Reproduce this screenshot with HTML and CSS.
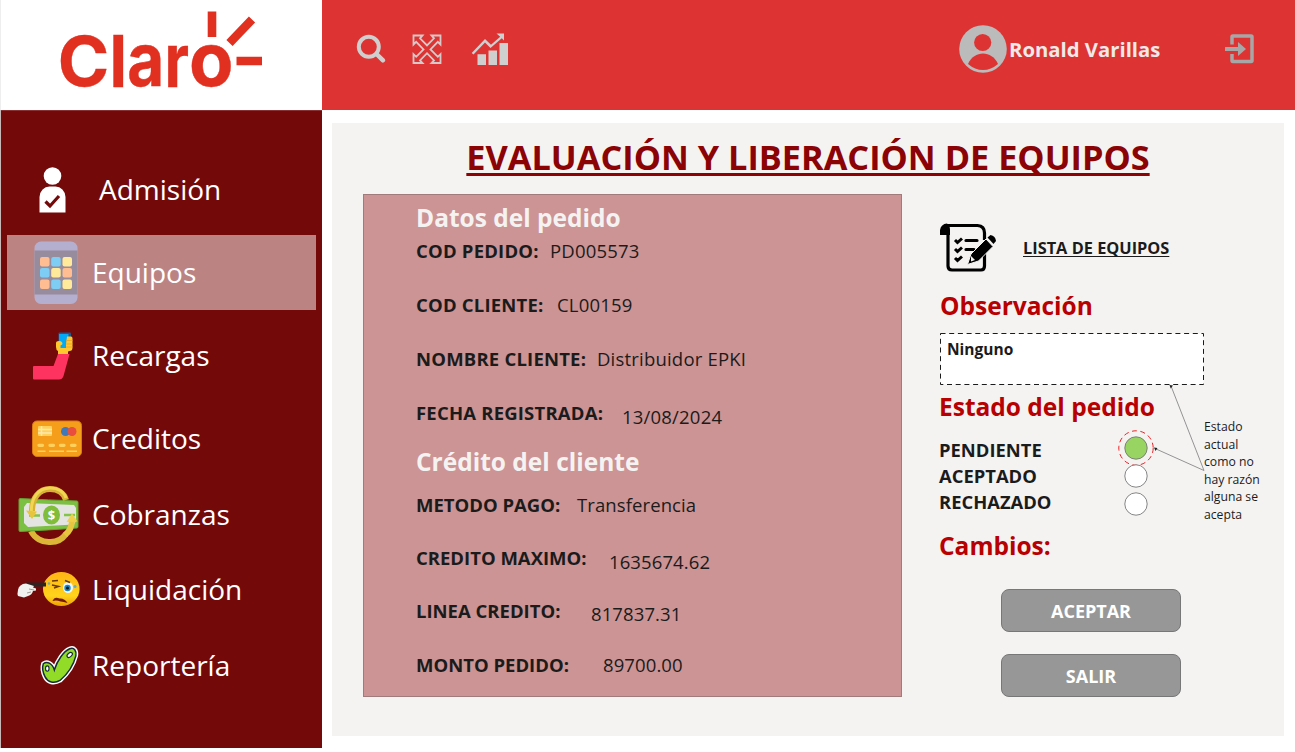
FILE: index.html
```html
<!DOCTYPE html>
<html lang="es">
<head>
<meta charset="utf-8">
<title>Evaluación y liberación de equipos</title>
<link rel="stylesheet" href="styles.css">
</head>
<body>
<div class="app">
  <aside class="side">
    <div class="brand">
      <svg width="322" height="110" viewBox="0 0 322 110" role="img" aria-label="Claro">
        <g class="brand-text">
          <text x="57.800" y="86" font-size="69" textLength="51.500" lengthAdjust="spacingAndGlyphs">C</text>
          <text x="109.500" y="87" font-size="71" textLength="17.500" lengthAdjust="spacingAndGlyphs">l</text>
          <text x="127.200" y="86" font-size="75" textLength="37" lengthAdjust="spacingAndGlyphs">a</text>
          <text x="164.400" y="87" font-size="75" textLength="24.500" lengthAdjust="spacingAndGlyphs">r</text>
          <text x="189" y="86" font-size="75" textLength="44.500" lengthAdjust="spacingAndGlyphs">o</text>
        </g>
        <g stroke="#e13020" stroke-width="8.600"><path d="M212 11.500v25.500M229.500 43l22.500-23.500M236.500 61h25.500"/></g>
      </svg>
    </div>
    <nav class="menu">
      <a class="item item-first">
        <svg class="ico" viewBox="0 0 85 75"><circle cx="45.500" cy="23" r="8.800" fill="#fff"/><path d="M32.500 59.500V44a10 11 0 0 1 10-10.500h6a10 11 0 0 1 10 10.500v15.500z" fill="#fff"/><path d="M38.500 48.500l4.500 4.500 9-10" fill="none" stroke="#74090a" stroke-width="3.200"/></svg>
        <span>Admisión</span>
      </a>
      <a class="item active">
        <svg class="ico" viewBox="0 0 85 75"><rect x="27.500" y="6.500" width="43" height="62.500" rx="6.500" fill="#b5afcf"/><path d="M27.500 15.500h43v44h-43z" fill="#968c9d"/>
          <g fill="#ffbd91"><rect x="33" y="22" width="9.500" height="9.500" rx="2"/><rect x="55.500" y="33" width="9.500" height="9.500" rx="2"/><rect x="33" y="44.500" width="9.500" height="9.500" rx="2"/></g>
          <g fill="#7dcdf4"><rect x="44.200" y="22" width="9.500" height="9.500" rx="2"/><rect x="33" y="33" width="9.500" height="9.500" rx="2"/><rect x="44.200" y="44.500" width="9.500" height="9.500" rx="2"/></g>
          <g fill="#ffe99b"><rect x="55.500" y="22" width="9.500" height="9.500" rx="2"/><rect x="44.200" y="33" width="9.500" height="9.500" rx="2"/><rect x="55.500" y="44.500" width="9.500" height="9.500" rx="2"/></g></svg>
        <span>Equipos</span>
      </a>
      <a class="item">
        <svg class="ico" viewBox="0 0 85 75"><path d="M27 48h19.500L51 36h11.500l-6 22q-1.200 3.500-4.500 3.500H27q-1 0-1-1V49q0-1 1-1z" fill="#ff3360"/><rect x="51.500" y="14.500" width="12.500" height="17" rx="1" fill="#22578f"/><path d="M52 16h9.500v14H52z" fill="#03a9f4"/><path d="M51 36v-3q-2-1-2-4v-4q0-2 3-2 3.500 0 3.500 3-1 1-2 1.500v2.500h5.500V26l1-7.500h4q1.500 0 1.500 2v9q0 3.500-3 3.500l-1.500.5V36z" fill="#ffc72e"/><path d="M59 22.500h6.500M59 26h6.500M59 29h6.500" stroke="#e89c28" stroke-width=".7"/></svg>
        <span>Recargas</span>
      </a>
      <a class="item">
        <svg class="ico" viewBox="0 0 85 75"><rect x="25.500" y="20" width="49" height="35.500" rx="4.500" fill="#f59e1b" stroke="#d77c13"/><rect x="31" y="25" width="14" height="10" rx="1" fill="#ffd05b"/><path d="M31 28.500h14M31 32h14M34.500 25v10" stroke="#ffe8ae" stroke-width="1.500"/><circle cx="58.500" cy="30.500" r="4.500" fill="#4179b8"/><circle cx="65" cy="30.500" r="4.500" fill="#e84d3d"/><path d="M32 44.300h3.500M43 44.300h3.500M53.500 44.300h3.500M64.500 44.300H68" stroke="#ffd15c" stroke-width="3.300" stroke-linecap="round"/><path d="M30.500 50.300h8M42 50.300h15M59.500 50.300h10.500" stroke="#ffd15c" stroke-width="1.500"/></svg>
        <span>Creditos</span>
      </a>
      <a class="item">
        <svg class="ico" viewBox="0 0 85 75"><path d="M24 54a20 20 0 0 0 19 11 19 19 0 0 0 16-8" fill="none" stroke="#dcb637" stroke-width="6"/><path d="M13 21.500q29 1.500 57 2.500 1 0 1 1.500v24q0 1.500-1 1.500-28 2-57 3.500-1 0-1-1.500V23q0-1.500 1-1.500z" fill="#7cc043" stroke="#65a333"/><path d="M20 26q23 1 47 2l2 3v13l-2 3.500q-24 1-46 2.500l-4-4V30z" fill="#e4e5e2"/><path d="M22 38.500h11M57 38h11" stroke="#83c44a" stroke-width="2.500"/><ellipse cx="44.500" cy="38" rx="8.500" ry="9.500" fill="#7fbd3b"/><text x="44.500" y="42.500" class="dollar">$</text><path d="M25 34c0-13 7-22 18-22 8 0 14 4 16 11" fill="none" stroke="#d8b135" stroke-width="6"/><path d="M24.300 34c0-13 7-23 18.700-23 8 0 14 4 16 10" fill="none" stroke="#f1d653" stroke-width="3"/><path d="M19 33.500l11 1-5 7.500z" fill="#e8c53e"/><path d="M58 58c5-4 7-9 7-15" fill="none" stroke="#e8c640" stroke-width="6"/><path d="M59.500 45l5.500-8.500 5.500 8z" fill="#f0d04b"/></svg>
        <span>Cobranzas</span>
      </a>
      <a class="item">
        <svg class="ico" viewBox="0 0 85 75"><defs><linearGradient id="face" x2="0" y2="1"><stop offset="0" stop-color="#ffb515"/><stop offset=".7" stop-color="#ffd31c"/><stop offset="1" stop-color="#efa100"/></linearGradient></defs><ellipse cx="54.300" cy="37" rx="18.300" ry="17" fill="url(#face)"/><path d="M19 30.500h20v4H27l-2 3z" fill="#292522"/><path d="M11 44q-1-2 0-6 1-6 8-6.500l8 2.500-1 1.500 3 1v2l-3 .5q-1 4-5 5l-4 1.500z" fill="#f1f1ef"/><path d="M22 37l5 1M20 41l4-1" stroke="#8a8782" stroke-width=".8"/><ellipse cx="61" cy="35.500" rx="5" ry="5.500" fill="#eaf7ff"/><circle cx="60.500" cy="36" r="3.200" fill="#1688c9"/><circle cx="60.500" cy="36" r="1.500" fill="#111"/><path d="M45 33l6.500 1.500-4.500 1.500M45 29l6-.5M58 28.500l5 2" fill="none" stroke="#6a3800" stroke-width="1.500"/><path d="M45.500 49q2-5 7-2.500 5-.5 8 4.500-4-1.500-7-1.500-4-1.500-8-.5z" fill="#761a0c"/><circle cx="42" cy="31.500" r="1.300" fill="#67adc2"/><circle cx="68" cy="34.500" r="1.500" fill="#67adc2"/></svg>
        <span>Liquidación</span>
      </a>
      <a class="item">
        <svg class="ico" viewBox="0 0 85 75"><g transform="translate(5.500 2.300) scale(.88)"><path d="M35 38c4-3 10-1 12.500 7C51 34 58 24 65 21c5-2 8 2 7 8-3 12-11 22-18 28-7 4-14 2-17-4-2-4-4-9-2-15z" fill="#92dc27" stroke="#fff" stroke-width="5"/><path d="M35 38c4-3 10-1 12.500 7C51 34 58 24 65 21c5-2 8 2 7 8-3 12-11 22-18 28-7 4-14 2-17-4-2-4-4-9-2-15z" fill="#92dc27" stroke="#172a3b" stroke-width="1.700"/><ellipse cx="39.500" cy="43.500" rx="2" ry="3" fill="#fff" stroke="#172a3b" stroke-width="1.300"/><ellipse cx="65" cy="28" rx="3.500" ry="2.200" transform="rotate(-40 65 28)" fill="#fff" stroke="#172a3b" stroke-width="1.300"/></g></svg>
        <span>Reportería</span>
      </a>
    </nav>
  </aside>
  <div class="content">
    <header class="top">
      <svg class="tools" width="200" height="50" viewBox="340 25 200 50">
        <g fill="none" stroke="#d0cfd0"><circle cx="368.800" cy="46.800" r="10" stroke-width="4"/><path d="M377 54.500l6 5.800" stroke-width="4.500" stroke-linecap="round"/></g>
        <path d="M413.500 35.500h9l-2.500 2.800 7 7.200 7-7.200-2.500-2.800h9v9l-2.700-2.700-7.300 7.700 7.300 7.300 2.700-2.700v8.900h-9l2.500-2.500-7-7.300-7 7.300 2.500 2.500h-9v-8.900l2.700 2.700 7.300-7.300-7.300-7.700-2.700 2.700z" fill="none" stroke="#d7c9ca" stroke-width="1.800"/>
        <path d="M477.500 54.200h8.500V65h-8.500zM488.500 50.500h8.500V65h-8.500zM499.500 43h8.500V65h-8.500zM496.500 33.500h7.500v7l-2.200-2.200-11.300 9.700-5.500-5.500-11.500 12-1.800-1.600 13.300-13.900 6 5.700 9.200-8z" fill="#d0cfd0"/>
      </svg>
      <div class="user">
        <svg width="48" height="48" viewBox="0 0 48 48"><circle cx="24" cy="24" r="23.800" fill="#bbb"/><circle cx="23.700" cy="17.500" r="8.600" fill="#de3333"/><path d="M9 39c3-7 9-10.500 15-10.500S36 32 39 39q-7 6-15 6T9 39z" fill="#de3333"/></svg>
        <span>Ronald Varillas</span>
      </div>
      <svg class="exit" width="30" height="30" viewBox="0 0 30 30"><path d="M7 10.500V3q0-1 1-1h18q1 0 1 1v23.500q0 1-1 1H8q-1 0-1-1V20" fill="none" stroke="#a7a7a7" stroke-width="3.500"/><path d="M0 13h13V8l8 7-8 7v-5H0z" fill="#a7a7a7"/></svg>
    </header>
    <main class="card">
      <h1>EVALUACIÓN Y LIBERACIÓN DE EQUIPOS</h1>
      <div class="cols">
        <section class="panel">
          <h2>Datos del pedido</h2>
          <div class="row wide"><b class="k1">COD PEDIDO:</b><span class="v1">PD005573</span></div>
          <div class="row wide"><b class="k2">COD CLIENTE:</b><span class="v2">CL00159</span></div>
          <div class="row wide"><b class="k3">NOMBRE CLIENTE:</b><span class="v3">Distribuidor EPKI</span></div>
          <div class="row wide"><b class="k4">FECHA REGISTRADA:</b><span class="v4">13/08/2024</span></div>
          <h2>Crédito del cliente</h2>
          <div class="row"><b class="k5">METODO PAGO:</b><span class="v5">Transferencia</span></div>
          <div class="row"><b class="k6">CREDITO MAXIMO:</b><span class="v6">1635674.62</span></div>
          <div class="row"><b class="k7">LINEA CREDITO:</b><span class="v7">817837.31</span></div>
          <div class="row"><b class="k8">MONTO PEDIDO:</b><span class="v8">89700.00</span></div>
        </section>
        <section class="review">
          <a class="list-link">
            <svg width="57" height="50" viewBox="0 0 57 50"><path d="M8 11V43q0 4 4 4h29q3.500 0 3.500-4V30M44.500 17V10q0-7-7-7.500H7" fill="none" stroke="#000" stroke-width="3.200"/><path d="M0 12V7q1-6 7-6.500 3 2 3 6V12z" fill="#000"/><path d="M26 17.500h11M26 26.500h8" stroke="#000" stroke-width="3.200" stroke-linecap="round"/><path d="M15 17l2.500 2.500 4.500-4M15 26l2.500 2.500 4.500-4M15 35l2.500 2.500 4.500-4" fill="none" stroke="#000" stroke-width="3"/><path d="M31 31L46 16l7 7.500-14.500 14.500L27.500 41.500z" fill="#000" stroke="#f5f3f2"/><path d="M47.500 14.500l3-2.500q5 1 5.500 6l-2.500 3z" fill="#000"/><path d="M31 33l4 4-4 1.500z" fill="#f5f3f2"/></svg>
            <span>LISTA DE EQUIPOS</span>
          </a>
          <h3 class="h-obs">Observación</h3>
          <div class="note"><svg class="dash" width="265" height="53"><rect x=".5" y=".5" width="263" height="51" fill="#fff" stroke="#1b1b1b" stroke-dasharray="5 3.700"/></svg><span>Ninguno</span></div>
          <div class="status">
            <div class="status-main">
              <h3 class="h-est">Estado del pedido</h3>
              <div class="options">
                <div class="labels"><b>PENDIENTE</b><b>ACEPTADO</b><b>RECHAZADO</b></div>
                <svg width="36" height="86" viewBox="1118 430 36 86"><circle cx="1136" cy="448" r="17.200" fill="none" stroke="#ee2024" stroke-dasharray="5 3.500"/><g stroke="#777" stroke-width=".9"><circle cx="1136" cy="448" r="11.200" fill="#98d461"/><circle cx="1136" cy="476" r="11.200" fill="#fff"/><circle cx="1136" cy="504" r="11.200" fill="#fff"/></g></svg>
              </div>
              <h3 class="h-cam">Cambios:</h3>
            </div>
            <p class="hint">Estado<br>actual<br>como no<br>hay razón<br>alguna se<br>acepta</p>
            <svg class="links" width="60" height="95" viewBox="1150 383 60 95"><path d="M1171 386L1204 470.500 1155 448.500" fill="none" stroke="#888" stroke-width=".9"/><path d="M1169.500 385l3.500.5-2.300 3zM1154 447.500l3.500.5-2 3z" fill="#222"/></svg>
          </div>
          <div class="actions"><button>ACEPTAR</button><button>SALIR</button></div>
        </section>
      </div>
    </main>
  </div>
</div>
</body>
</html>
```

FILE: styles.css
```css
* { box-sizing: border-box; }
body { margin: 0; background: #fff; font-family: "Open Sans", "Noto Sans", sans-serif; color: #1b1b1b; overflow: hidden; }
h1, h2, h3, p { margin: 0; }
svg { display: block; flex: none; }
.app { display: flex; width: 1295px; height: 752px; }
.side { width: 322px; height: 748px; display: flex; flex-direction: column; border-left: 1px solid #c9b8b8; }
.brand { height: 110px; margin-left: -1px; border-left: 1px solid #eee; }
.brand svg { margin-left: -1px; }
.brand-text { font-family: Inter, "Liberation Sans", sans-serif; font-weight: 700; fill: #e13020; stroke: #e13020; stroke-width: .4px; }
.menu { flex: 1; background: #74090a; border-top: 1px solid #8b3032; padding: 42px 6px 0; display: grid; grid-template-rows: 82px 83px 83px 76px 75px 76px 75px; align-content: start; }
.item { height: 75px; display: flex; align-items: center; color: #fff; font-size: 28px; line-height: 38px; white-space: nowrap; }
.item span { padding-bottom: 1px; }
.item-first span { padding-bottom: 3px; }
.active { background: #bb8483; }
.ico { width: 85px; height: 75px; }
.item-first .ico { margin-right: 7px; }
.dollar { font: bold 13px "Open Sans", sans-serif; fill: #fff; text-anchor: middle; }
.content { flex: 1; display: flex; flex-direction: column; }
.top { height: 110px; background: #de3333; display: flex; align-items: flex-start; padding: 25px 40px 0 18px; }
.user { display: flex; align-items: center; gap: 2px; margin-left: 419px; color: #efe9e9; font-size: 20.300px; font-weight: 700; line-height: 28px; width: 204px; white-space: nowrap; height: 48px; }
.exit { margin: 9px 0 0 auto; }
.card { margin: 13px 0 0 10px; width: 952px; height: 613px; background: #f5f3f2; }
h1 { height: 71px; padding-top: 10px; text-align: center; font-size: 34.300px; line-height: 48px; color: #8b0304; text-decoration: underline; text-decoration-thickness: 2.500px; text-underline-offset: 3px; text-decoration-skip-ink: none; white-space: nowrap; }
.cols { display: flex; padding-left: 31px; }
.panel { width: 539px; height: 503px; background: #cc9494; border: 1px solid #a17a7a; padding: 6px 0 0 52px; display: grid; grid-template-rows: 38px 54px 54px 54px 44px 48px 53px 53px 54px 36px; align-content: start; }
h2 { font-size: 24.500px; line-height: 33px; color: #f5f3f2; white-space: nowrap; }
.row { display: flex; font-size: 18.500px; line-height: 24px; white-space: nowrap; }
.wide { letter-spacing: .2px; }
.row b { flex: none; }
.k1 { width: 134px; } .k2 { width: 141px; } .k3 { width: 181px; } .k4 { width: 206px; }
.k5 { width: 161px; } .k6 { width: 193px; } .k7 { width: 175px; } .k8 { width: 187px; }
.v4, .v6 { padding-top: 4px; } .v7 { padding-top: 3px; }
.v5, .v6, .v7, .v8 { letter-spacing: .1px; }
.review { width: 350px; padding-left: 37px; display: flex; flex-direction: column; }
.list-link { display: flex; align-items: center; gap: 26px; height: 50px; margin: 29px 0 16px 1px; font-size: 16.350px; font-weight: 700; text-decoration: underline; text-decoration-skip-ink: none; text-underline-offset: 2px; }
h3 { font-size: 24.500px; line-height: 34px; color: #b80000; white-space: nowrap; }
.h-obs { height: 44px; padding-left: 1px; }
.note { position: relative; width: 265px; height: 53px; margin-left: 1px; padding: 5px 7px; font-size: 15.500px; font-weight: 700; line-height: 22px; }
.note span { position: relative; }
.dash { position: absolute; left: 0; top: 0; }
.status { position: relative; display: flex; height: 203px; padding-top: 4px; }
.status-main { width: 265px; flex: none; }
.h-est { height: 40px; }
.options { display: flex; height: 98px; }
.h-cam { padding-top: 1px; }
.labels { width: 179px; display: flex; flex-direction: column; padding-top: 7px; font-size: 18.400px; line-height: 26px; }
.hint { font-size: 12.200px; line-height: 17.500px; padding-top: 28px; white-space: nowrap; }
.links { position: absolute; left: 211px; top: -3px; }
.actions { display: flex; flex-direction: column; gap: 22px; padding-left: 62px; }
button { width: 180px; height: 43px; border: 1px solid #777; border-radius: 8px; background: #979797; color: #fff; font: 700 18px/24px "Open Sans", sans-serif; padding: 0; }
```
